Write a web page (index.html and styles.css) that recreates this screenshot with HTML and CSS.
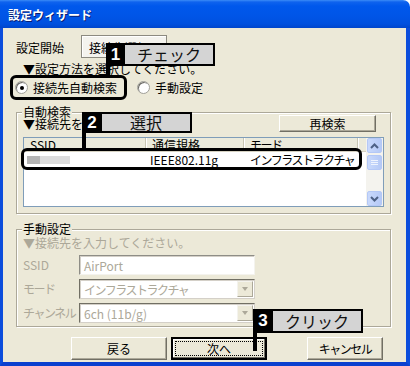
FILE: index.html
```html
<!DOCTYPE html>
<html lang="ja">
<head>
    <meta charset="UTF-8">
    <title>設定ウィザード</title>
    <link rel="stylesheet" href="styles.css">
</head>
<body>
    <div class="window">
        <div class="titlebar"><span class="title">設定ウィザード</span></div>
        <div class="frame">
            <div class="tabs">
                <span class="tab">設定開始</span>
                <span class="tab tab-active">接続先選択</span>
            </div>
            <p class="hint hint-top">▼設定方法を選択してください。</p>
            <div class="radios">
                <label class="radio"><span class="dot checked"></span>接続先自動検索</label>
                <label class="radio"><span class="dot"></span>手動設定</label>
            </div>

            <div class="group group-auto">
                <div class="group-title">自動検索</div>
                <div class="auto-head">
                    <p class="hint">▼接続先を選択してください。</p>
                    <button class="btn btn-rescan">再検索</button>
                </div>
                <div class="list">
                    <div class="list-main">
                        <div class="list-header">
                            <span class="col col-ssid">SSID</span>
                            <span class="col col-std">通信規格</span>
                            <span class="col col-mode kana">モード</span>
                            <span class="col col-fill"></span>
                        </div>
                        <div class="list-row">
                            <span class="col col-ssid"><span class="blur blur-a"></span><span class="blur blur-b"></span></span>
                            <span class="col col-std">IEEE802.11g</span>
                            <span class="col col-mode kana">インフラストラクチャ</span>
                        </div>
                    </div>
                    <div class="scrollbar">
                        <span class="sb-btn">
                            <svg width="9" height="6" viewBox="0 0 9 6"><path d="M1 5 L4.5 1.5 L8 5" fill="none" stroke="#4d6185" stroke-width="2"/></svg>
                        </span>
                        <span class="sb-thumb">
                            <svg width="7" height="7" viewBox="0 0 7 7"><path d="M0 1.5h7M0 3.5h7M0 5.5h7" stroke="#eef3fe" stroke-width="1"/></svg>
                        </span>
                        <span class="sb-track"></span>
                        <span class="sb-btn">
                            <svg width="9" height="6" viewBox="0 0 9 6"><path d="M1 1 L4.5 4.5 L8 1" fill="none" stroke="#4d6185" stroke-width="2"/></svg>
                        </span>
                    </div>
                </div>
            </div>

            <div class="group group-manual">
                <div class="group-title">手動設定</div>
                <p class="hint disabled hint-manual">▼接続先を入力してください。</p>
                <div class="field">
                    <span class="field-label">SSID</span>
                    <span class="input">AirPort</span>
                </div>
                <div class="field">
                    <span class="field-label kana">モード</span>
                    <span class="input select kana">インフラストラクチャ<span class="arrow"></span></span>
                </div>
                <div class="field">
                    <span class="field-label kana">チャンネル</span>
                    <span class="input select">6ch (11b/g)<span class="arrow"></span></span>
                </div>
            </div>

            <div class="buttons">
                <button class="btn btn-wide">戻る</button>
                <button class="btn btn-wide btn-default"><span class="focus">次へ</span></button>
                <button class="btn btn-cancel kana">キャンセル</button>
            </div>
        </div>

        <!-- annotation overlays -->
        <div class="ring ring-1"></div>
        <div class="ring ring-2"></div>
        <div class="callout callout-1"><span class="num">1</span><span class="note">チェック</span></div>
        <div class="callout callout-2"><span class="num">2</span><span class="note">選択</span></div>
        <div class="callout callout-3"><span class="num">3</span><span class="note">クリック</span></div>
    </div>
</body>
</html>
```

FILE: styles.css
```css
* {
    box-sizing: border-box;
}
body {
    margin: 0;
    width: 410px;
    height: 366px;
    overflow: hidden;
    font-family: "Noto Sans CJK JP", sans-serif;
    font-size: 12px;
    line-height: 12px;
    color: #000;
    background: #fff;
    white-space: nowrap;
}
p {
    margin: 0;
}
.kana {
    letter-spacing: -1.5px;
}
.window {
    position: relative;
    width: 410px;
    height: 366px;
}
.titlebar {
    height: 28px;
    padding: 9px 0 0 8px;
    border-top-right-radius: 7px;
    background: linear-gradient(to bottom, #3b8cf7 0, #0f63ee 2px, #0058ec 6px, #0055e7 16px, #0050de 24px, #0046cc 28px);
}
.title {
    color: #fff;
    font-weight: bold;
    font-size: 12px;
    text-shadow: 1px 1px 0 #0a1e72;
}
.frame {
    height: 338px;
    background: #ece9d8;
    border-left: 3px solid #0b4ddc;
    border-right: 4px solid #0b4ddc;
    border-bottom: 4px solid #0a40cf;
    padding-left: 13px;
    overflow: hidden;
}

/* tabs */
.tabs {
    display: flex;
    margin-top: 7px;
    height: 23px;
}
.tab {
    width: 65px;
    padding-top: 7px;
}
.tab-active {
    width: 86px;
    padding: 6px 0 0 7px;
    background: #f4f3ee;
    border: 1px solid #8c8a80;
    box-shadow: inset 1px 1px 0 #fff;
}

.hint {
    height: 12px;
}
.hint-top {
    margin-top: 5px;
    padding-left: 7px;
}
.disabled {
    color: #aca899;
}

/* radios */
.radios {
    display: flex;
    margin-top: 6px;
    height: 13px;
}
.radio {
    display: flex;
    align-items: center;
    gap: 5px;
    margin-left: -1px;
}
.radio + .radio {
    margin-left: 20px;
}
.dot {
    width: 13px;
    height: 13px;
    border-radius: 50%;
    background: #fff;
    border: 1px solid #a09f98;
    box-shadow: inset 1px 1px 0 #6c6b66;
    display: flex;
    align-items: center;
    justify-content: center;
}
.dot.checked::after {
    content: "";
    width: 4px;
    height: 4px;
    border-radius: 50%;
    background: #000;
}

/* group boxes */
.group {
    width: 375px;
    border: 1px solid #aca899;
    box-shadow: inset 1px 1px 0 #fff, 1px 1px 0 #fff;
    padding: 0 6px;
}
.group-auto {
    margin-top: 18px;
    height: 102px;
}
.group-manual {
    margin-top: 15px;
    height: 98px;
}
.group-title {
    margin: -7px 0 0 -1px;
    height: 12px;
    width: max-content;
    padding: 0 1px;
    background: #ece9d8;
}
.auto-head {
    display: flex;
    align-items: center;
    justify-content: space-between;
    margin-top: -3px;
    height: 17px;
    padding-right: 8px;
}
.btn {
    font-family: inherit;
    font-size: 12px;
    line-height: 12px;
    color: #000;
    background: #ece9d8;
    border: 1px solid;
    border-color: #fff #716f64 #716f64 #fff;
    box-shadow: inset -1px -1px 0 #aca899;
    padding: 0;
}
.btn-rescan {
    width: 97px;
    height: 17px;
}

/* list view */
.list {
    display: flex;
    margin-top: 5px;
    width: 361px;
    height: 70px;
    border: 1px solid #7f9db9;
    background: #fff;
}
.list-main {
    flex: 1;
}
.list-header {
    display: flex;
    height: 14px;
    background: #ebeadb;
    border-bottom: 1px solid #d6d2c2;
}
.list-header .col {
    border-right: 1px solid #c7c5b2;
    box-shadow: 1px 0 0 #fff;
    padding: 1px 0 0 6px;
}
.list-header .col-fill {
    flex: 1;
    border-right: 0;
    box-shadow: none;
}
.col-ssid {
    width: 122px;
}
.col-std {
    width: 98px;
}
.col-mode {
    width: 114px;
}
.list-row {
    display: flex;
    height: 15px;
    padding-top: 2px;
}
.list-row .col-std {
    padding-left: 4px;
}
.list-row .col-mode {
    padding-left: 6px;
}
.list-row .col-ssid {
    display: flex;
    padding: 2px 0 0 3px;
}
.blur {
    height: 8px;
}
.blur-a {
    width: 13px;
    background: #b4b4b4;
}
.blur-b {
    width: 30px;
    background: #dcdcdc;
}

.scrollbar {
    width: 17px;
    display: flex;
    flex-direction: column;
    gap: 1px;
    padding: 0 1px;
    background: #f4f3ee;
}
.sb-btn,
.sb-thumb {
    height: 15px;
    display: flex;
    align-items: center;
    justify-content: center;
    background: linear-gradient(to right, #c9d9fc, #b5c9f6);
    border: 1px solid #b4c8f6;
    border-radius: 2px;
}
.sb-thumb {
    margin-top: 1px;
}
.sb-track {
    flex: 1;
}

/* manual settings */
.hint-manual {
    margin-top: 2px;
}
.field {
    display: flex;
    align-items: center;
    height: 20px;
    margin-top: 4px;
    color: #aca899;
}
.hint-manual + .field {
    margin-top: 6px;
}
.field-label {
    width: 56px;
}
.input {
    position: relative;
    width: 176px;
    height: 20px;
    padding: 4px 0 0 4px;
    background: #fff;
    border: 1px solid;
    border-color: #8e8d86 #f4f3ee #f4f3ee #8e8d86;
    box-shadow: inset 1px 1px 0 #d4d0c8;
}
.select {
    border-color: #716f64 #d4d0c8 #d4d0c8 #716f64;
}
.arrow {
    position: absolute;
    right: 1px;
    top: 1px;
    width: 16px;
    height: 16px;
    background: #ece9d8;
    border: 1px solid;
    border-color: #f4f3ee #aca899 #aca899 #f4f3ee;
}
.arrow::after {
    content: "";
    position: absolute;
    left: 4px;
    top: 5px;
    border-left: 3px solid transparent;
    border-right: 3px solid transparent;
    border-top: 4px solid #aca899;
}

/* bottom buttons */
.buttons {
    display: flex;
    margin-top: 10px;
    padding-left: 55px;
    height: 23px;
}
.btn-wide {
    width: 96px;
    height: 23px;
    margin-right: 4px;
}
.btn-default {
    border: 2px solid #000;
    box-shadow: inset -1px -1px 0 #716f64, inset 1px 1px 0 #fff;
    padding: 2px;
}
.focus {
    display: block;
    height: 15px;
    padding-top: 1px;
    border: 1px dotted #000;
}
.btn-cancel {
    width: 76px;
    height: 23px;
    margin-left: 36px;
}

/* annotations */
.ring {
    position: absolute;
    border: 3px solid #000;
    border-radius: 6px;
}
.ring-1 {
    left: 10px;
    top: 75px;
    width: 117px;
    height: 25px;
}
.ring-2 {
    left: 21px;
    top: 148px;
    width: 341px;
    height: 22px;
}
.callout {
    position: absolute;
    display: flex;
    height: 23px;
}
.num {
    position: relative;
    width: 19px;
    background: #000;
    color: #fff;
    font-family: "Liberation Sans", Arial, sans-serif;
    font-weight: bold;
    font-size: 17px;
    line-height: 23px;
    text-align: center;
}
.num::after {
    content: "";
    position: absolute;
    left: 0;
    top: 100%;
    width: 4px;
    background: #000;
}
.note {
    width: 90px;
    background: #d4d4d4;
    border: 2px solid #000;
    border-left: 0;
    font-size: 16px;
    line-height: 19px;
    text-align: center;
    color: #111;
}
.callout-1 {
    left: 106px;
    top: 43px;
}
.callout-1 .num::after {
    height: 10px;
}
.callout-2 {
    left: 82px;
    top: 112px;
    height: 21px;
}
.callout-2 .num {
    width: 20px;
    line-height: 21px;
}
.callout-2 .note {
    line-height: 17px;
}
.callout-2 .num::after {
    height: 16px;
}
.callout-3 {
    left: 253px;
    top: 309px;
    height: 24px;
}
.callout-3 .num {
    width: 20px;
    line-height: 24px;
}
.callout-3 .note {
    line-height: 20px;
}
.callout-3 .num::after {
    height: 18px;
}
```
